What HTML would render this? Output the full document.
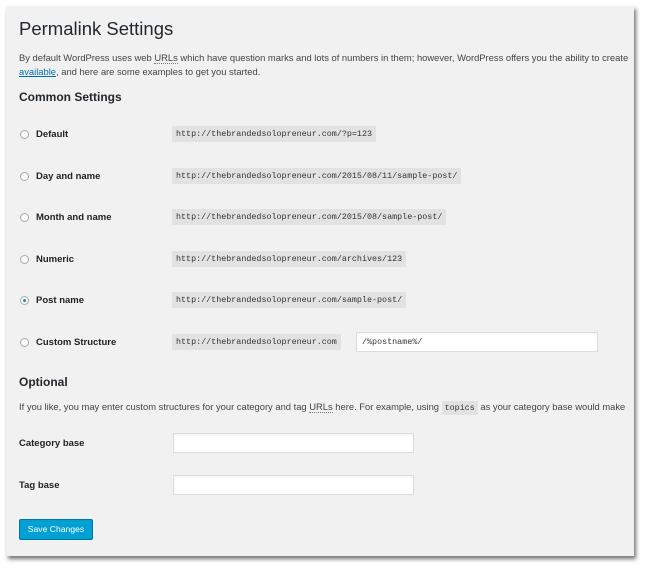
<!DOCTYPE html>
<html><head><style>
body{margin:0;background:#fff;width:650px;height:572px;overflow:hidden;font-family:"Liberation Sans",sans-serif;color:#333;position:relative}
.panel{position:absolute;left:6px;top:6px;width:628px;height:550px;background:#f1f1f1;box-shadow:2px 3px 4px rgba(0,0,0,.55);overflow:hidden}
.a{position:absolute;white-space:nowrap}
h1{position:absolute;left:13px;top:12px;margin:0;font-size:18.5px;font-weight:normal;color:#23282d}
.p{font-size:9.4px;color:#444}
.h{font-size:12px;font-weight:bold;color:#23282d}
.lab{font-size:9.5px;font-weight:bold;color:#222}
code{position:absolute;font-family:"Liberation Mono",monospace;font-size:8.4px;background:#e2e2e2;padding:3px 4px;color:#333;white-space:nowrap}
.r{position:absolute;width:7px;height:7px;border:1px solid #aaa;border-radius:50%;background:#fafafa}
.r.on::after{content:"";position:absolute;left:2px;top:2px;width:3px;height:3px;border-radius:50%;background:#1e8cbe}
.in{position:absolute;background:#fff;border:1px solid #ddd;box-shadow:inset 0 1px 2px rgba(0,0,0,.06)}
.btn{position:absolute;left:13px;top:513px;width:72px;height:19px;background:#00a0d2;border:1px solid #0073aa;border-radius:2px;color:#fff;font-size:8.6px;line-height:19px;text-align:center}
</style></head><body>
<div class="panel">
<h1>Permalink Settings</h1>
<div class="a p" style="left:13px;top:46px">By default WordPress uses web <span style="border-bottom:1px dotted #777">URLs</span> which have question marks and lots of numbers in them; however, WordPress offers you the ability to create</div>
<div class="a p" style="left:13px;top:60px"><span style="color:#0073aa;text-decoration:underline">available</span>, and here are some examples to get you started.</div>
<div class="a h" style="left:13px;top:84px">Common Settings</div>

<div class="r" style="left:14px;top:124px"></div><div class="a lab" style="left:30px;top:123px">Default</div><code style="left:166px;top:120px">http://thebrandedsolopreneur.com/?p=123</code>
<div class="r" style="left:14px;top:166px"></div><div class="a lab" style="left:30px;top:165px">Day and name</div><code style="left:166px;top:162px">http://thebrandedsolopreneur.com/2015/08/11/sample-post/</code>
<div class="r" style="left:14px;top:207px"></div><div class="a lab" style="left:30px;top:206px">Month and name</div><code style="left:166px;top:203px">http://thebrandedsolopreneur.com/2015/08/sample-post/</code>
<div class="r" style="left:14px;top:249px"></div><div class="a lab" style="left:30px;top:248px">Numeric</div><code style="left:166px;top:245px">http://thebrandedsolopreneur.com/archives/123</code>
<div class="r on" style="left:14px;top:290px"></div><div class="a lab" style="left:30px;top:289px">Post name</div><code style="left:166px;top:286px">http://thebrandedsolopreneur.com/sample-post/</code>
<div class="r" style="left:14px;top:332px"></div><div class="a lab" style="left:30px;top:331px">Custom Structure</div><code style="left:166px;top:328px">http://thebrandedsolopreneur.com</code>
<div class="in" style="left:350px;top:326px;width:240px;height:18px"><span style="position:absolute;left:5px;top:4px;font-family:'Liberation Mono',monospace;font-size:8.4px">/%postname%/</span></div>

<div class="a h" style="left:13px;top:369px">Optional</div>
<div class="a p" style="left:13px;top:395px">If you like, you may enter custom structures for your category and tag <span style="border-bottom:1px dotted #777">URLs</span> here. For example, using <code style="position:relative;padding:2px 3px">topics</code> as your category base would make</div>

<div class="a lab" style="left:13px;top:432px">Category base</div>
<div class="in" style="left:167px;top:427px;width:239px;height:18px"></div>
<div class="a lab" style="left:13px;top:474px">Tag base</div>
<div class="in" style="left:167px;top:469px;width:239px;height:18px"></div>
<div class="btn">Save Changes</div>
</div>
</body></html>
